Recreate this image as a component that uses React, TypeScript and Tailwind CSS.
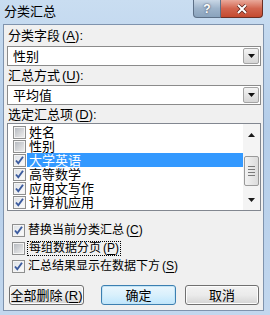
import React from "react";

const font = "font-['Liberation_Sans','Noto_Sans_CJK_SC',sans-serif]";

function Key({ k }: { k: string }) {
  return (
    <span className="ml-[2px]">
      (<span className="underline underline-offset-[2px]">{k}</span>)
    </span>
  );
}

function Check({ checked }: { checked: boolean }) {
  return (
    <span className="flex size-[13px] shrink-0 items-center justify-center border border-[#8e8f8f] bg-[#f4f4f4]">
      <span
        className={
          "relative flex size-[9px] items-center justify-center " +
          (checked
            ? "bg-gradient-to-br from-[#dfe3e8] to-[#fafafa]"
            : "bg-gradient-to-br from-[#b8bcc2] to-[#ececec]")
        }
      >
        {checked && (
          <svg width="11" height="11" viewBox="0 0 11 11" className="absolute -left-[1px] -top-[1px]">
            <path d="M2 5.5 L4.3 8.3 L9 1.8" fill="none" stroke="#3b5b9e" strokeWidth="1.9" />
          </svg>
        )}
      </span>
    </span>
  );
}

function Arrow({ up }: { up?: boolean }) {
  return (
    <svg width="7" height="4" viewBox="0 0 7 4">
      <polygon points={up ? "0,4 7,4 3.5,0" : "0,0 7,0 3.5,4"} fill="#1a1a1a" />
    </svg>
  );
}

function Combo({ value }: { value: string }) {
  return (
    <div className="flex h-[20px] w-[254px] items-center border border-[#8b8b8b] bg-white">
      <span className="flex-1 pl-[5px] text-[13px] leading-none text-black">{value}</span>
      <div className="mr-[1px] flex h-[16px] w-[16px] items-center justify-center rounded-[2px] border border-[#a4a4a4] bg-gradient-to-b from-[#f4f4f4] to-[#d6d6d6]">
        <svg width="7" height="4" viewBox="0 0 7 4">
          <polygon points="0,0 7,0 3.5,4" fill="#111" />
        </svg>
      </div>
    </div>
  );
}

function Label({ children, h }: { children: React.ReactNode; h: string }) {
  return (
    <div className={"flex items-center pl-[1px] text-[13px] leading-none text-black " + h}>{children}</div>
  );
}

const items = [
  { name: "姓名", checked: false },
  { name: "性别", checked: false },
  { name: "大学英语", checked: true, selected: true },
  { name: "高等数学", checked: true },
  { name: "应用文写作", checked: true },
  { name: "计算机应用", checked: true },
];

function Button({ children, primary, w }: { children: React.ReactNode; primary?: boolean; w: string }) {
  return (
    <div
      className={
        "flex h-[20px] items-center justify-center rounded-[3px] border text-[13px] leading-none text-black " +
        w +
        (primary
          ? " border-[#3c7fb1] bg-gradient-to-b from-[#eaf6fd] via-[#d9f0fc] to-[#bee6fd] shadow-[inset_0_0_0_1px_#c4e5f6]"
          : " border-[#707070] bg-gradient-to-b from-[#f2f2f2] via-[#ebebeb] to-[#d4d4d4] shadow-[inset_0_0_0_1px_#fcfcfc]")
      }
    >
      {children}
    </div>
  );
}

export default function App() {
  return (
    <div
      className={
        "flex h-[315px] w-[270px] flex-col overflow-hidden bg-[linear-gradient(180deg,#c9ddf1_0%,#b4cde9_40%,#c2d7ee_100%)] " +
        font
      }
    >
      {/* Title bar */}
      <div className="flex h-[24px] shrink-0 items-start">
        <span className="pl-[4px] pt-[5px] text-[13px] leading-none text-black">分类汇总</span>
        <div className="ml-auto mr-[7px] flex h-[18px]">
          <div className="flex w-[28px] items-center justify-center rounded-bl-[4px] border border-t-0 border-[#5d7087] bg-gradient-to-b from-[#c9d7e6] via-[#9db3ca] to-[#8aa3bd] text-[12px] font-bold leading-none text-white [text-shadow:0_0_2px_#334]">
            ?
          </div>
          <div className="flex w-[42px] items-center justify-center rounded-br-[4px] border border-l-0 border-t-0 border-[#6b2e24] bg-gradient-to-b from-[#e9a99b] via-[#d2654f] to-[#c44a2f]">
            <svg width="12" height="10" viewBox="0 0 12 10">
              <path d="M2 1 L10 9 M10 1 L2 9" stroke="#5a2219" strokeWidth="3.4" />
              <path d="M2 1 L10 9 M10 1 L2 9" stroke="#fff" strokeWidth="2" />
            </svg>
          </div>
        </div>
      </div>

      {/* Client area */}
      <div className="mb-[4px] ml-[3px] mr-[6px] flex flex-1 flex-col border border-[#7f93ad] bg-[#f0f0f0] pl-[3px]">
        <Label h="h-[21px]">
          分类字段<Key k="A" />:
        </Label>
        <Combo value="性别" />
        <Label h="h-[19px]">
          汇总方式<Key k="U" />:
        </Label>
        <Combo value="平均值" />
        <Label h="h-[18px]">
          选定汇总项<Key k="D" />:
        </Label>

        {/* List box */}
        <div className="flex h-[88px] w-[254px] border border-[#828790] bg-white">
          <div className="flex flex-1 flex-col pt-[1px]">
            {items.map((it) => (
              <div key={it.name} className="flex h-[14px] items-center">
                <div className="flex w-[19px] justify-end pr-[1px]">
                  <Check checked={it.checked} />
                </div>
                <span
                  className={
                    "flex h-[14px] flex-1 items-center pl-[2px] text-[13px] leading-none " +
                    (it.selected ? "bg-[#3399ff] text-white" : "text-black")
                  }
                >
                  {it.name}
                </span>
              </div>
            ))}
          </div>
          <div className="flex w-[17px] flex-col items-center bg-[#f4f4f4]">
            <div className="flex h-[17px] w-full items-center justify-center pt-[4px]">
              <Arrow up />
            </div>
            <div className="mt-[15px] flex h-[30px] w-[15px] flex-col items-center justify-center gap-[2px] rounded-[2px] border border-[#9a9a9a] bg-gradient-to-r from-[#f2f2f2] to-[#dcdcdc]">
              <span className="h-px w-[7px] bg-[#7a7a7a]" />
              <span className="h-px w-[7px] bg-[#7a7a7a]" />
              <span className="h-px w-[7px] bg-[#7a7a7a]" />
              <span className="h-px w-[7px] bg-[#7a7a7a]" />
            </div>
            <div className="mt-auto flex h-[17px] w-full items-center justify-center pb-[3px]">
              <Arrow />
            </div>
          </div>
        </div>

        {/* Options */}
        <div className="mt-[10px] flex flex-col text-[12px]">
          <div className="flex h-[18px] items-center gap-[3px] pl-[5px] leading-none text-black">
            <Check checked />
            <span>
              替换当前分类汇总<Key k="C" />
            </span>
          </div>
          <div className="flex h-[18px] items-center gap-[2px] pl-[5px] leading-none text-black">
            <Check checked={false} />
            <span className="flex h-[15px] items-center border border-dotted border-black px-px">
              每组数据分页<Key k="P" />
            </span>
          </div>
          <div className="flex h-[18px] items-center gap-[3px] pl-[5px] leading-none text-black">
            <Check checked />
            <span>
              汇总结果显示在数据下方<Key k="S" />
            </span>
          </div>
        </div>

        {/* Buttons */}
        <div className="mt-[10px] flex items-center pl-[2px]">
          <Button w="w-[75px]">
            全部删除<Key k="R" />
          </Button>
          <Button w="ml-[17px] w-[75px]" primary>
            确定
          </Button>
          <Button w="ml-[9px] w-[74px]">取消</Button>
        </div>
      </div>
    </div>
  );
}
